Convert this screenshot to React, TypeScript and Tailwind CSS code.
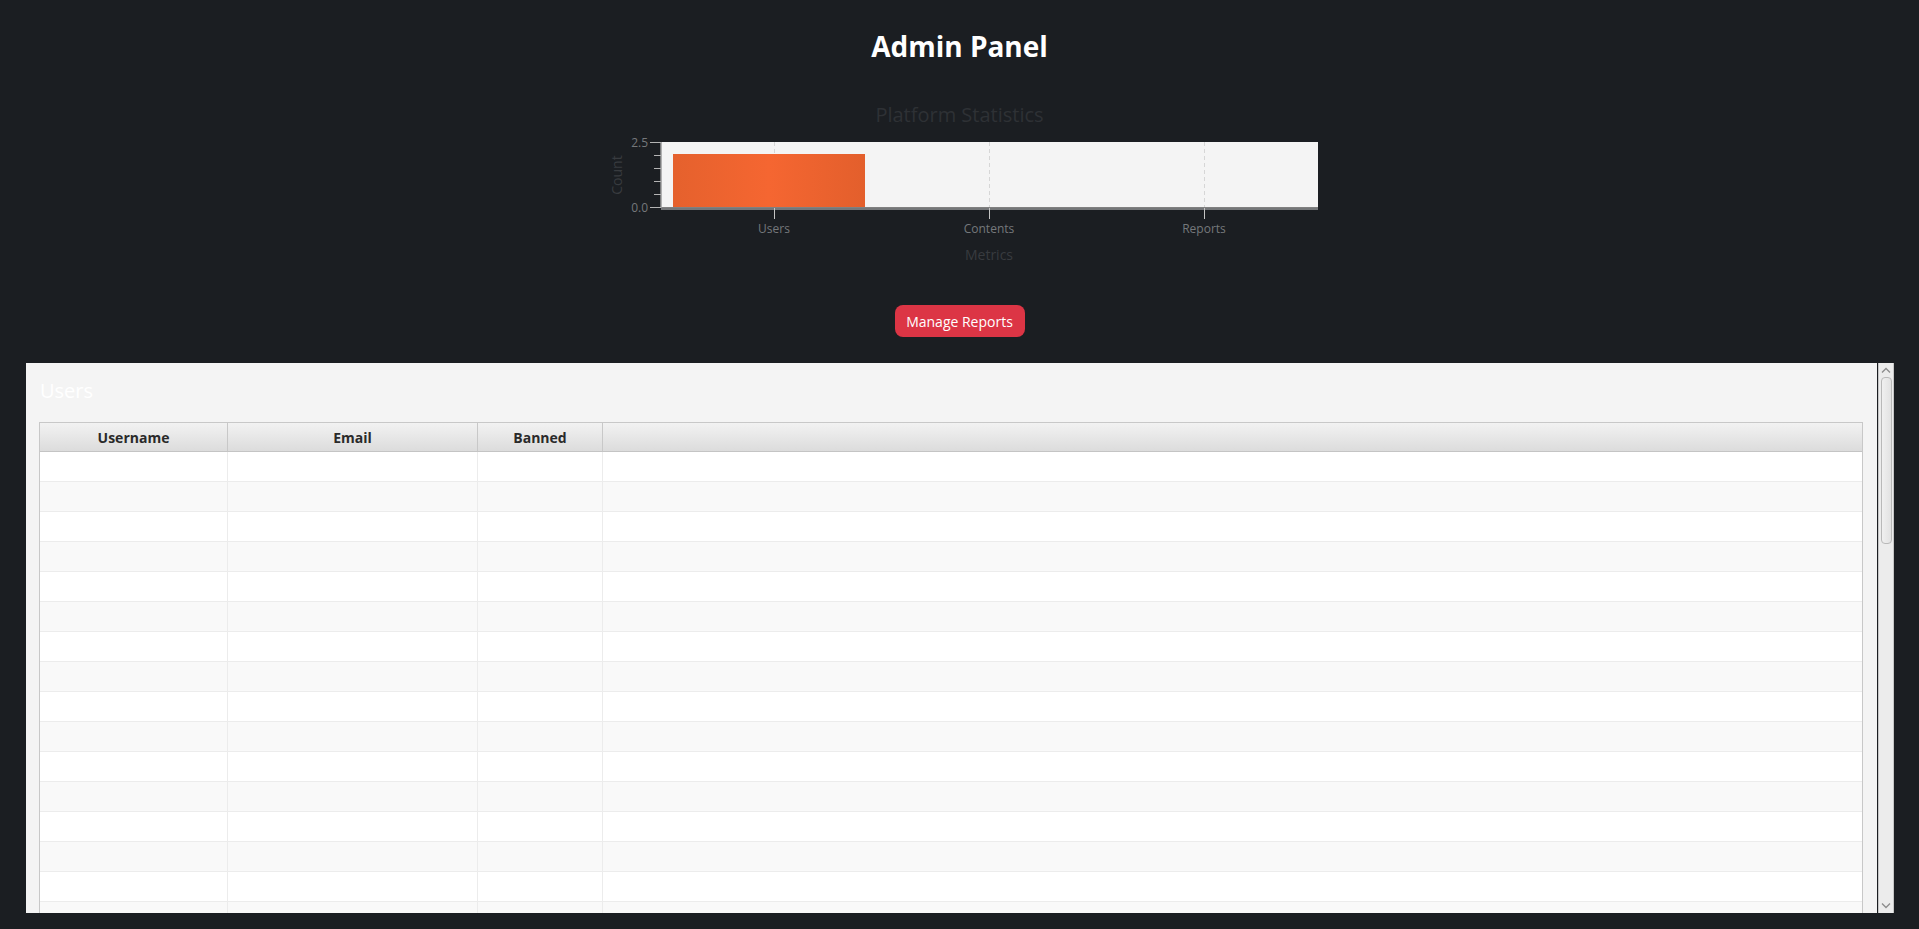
import React from 'react';

const COLS = [
  { key: 'username', label: 'Username', w: 'w-[188px]' },
  { key: 'email', label: 'Email', w: 'w-[250px]' },
  { key: 'banned', label: 'Banned', w: 'w-[125px]' },
];

const ROWS = Array.from({ length: 16 }, (_, i) => i);

function StatsChart() {
  // plot area: x 61..718, y 12..77 (svg coords)
  const gridX = [174, 389, 604];
  const minor = [25, 38, 51, 64];
  return (
    <svg width={720} height={140} viewBox="0 0 720 140" className="block mx-auto">
      <defs>
        <linearGradient id="bar" x1="0" x2="1" y1="0" y2="0">
          <stop offset="0" stopColor="#e5612d" />
          <stop offset="0.5" stopColor="#f56631" />
          <stop offset="1" stopColor="#e35f2c" />
        </linearGradient>
      </defs>
      <rect x={61} y={12} width={657} height={65} fill="#f4f4f4" />
      {gridX.map(x => (
        <line key={x} x1={x + 0.5} x2={x + 0.5} y1={12} y2={77} stroke="#d6d6d6" strokeDasharray="4 3" />
      ))}
      <rect x={73} y={24} width={192} height={53} fill="url(#bar)" />
      <line x1={61} x2={718} y1={77.5} y2={77.5} stroke="#808080" strokeWidth={1.2} />
      <line x1={61} x2={718} y1={79} y2={79} stroke="#cfcfcf" strokeWidth={1} />
      <line x1={61} x2={61} y1={12} y2={78} stroke="#9a9a9a" strokeWidth={1.5} />
      <line x1={50} x2={61} y1={12.5} y2={12.5} stroke="#b4b4b4" />
      <line x1={50} x2={61} y1={77.5} y2={77.5} stroke="#b4b4b4" />
      {minor.map(y => (
        <line key={y} x1={54} x2={61} y1={y + 0.5} y2={y + 0.5} stroke="#b4b4b4" />
      ))}
      {gridX.map(x => (
        <line key={'t' + x} x1={x + 0.5} x2={x + 0.5} y1={78} y2={89} stroke="#c4c4c4" />
      ))}
      <g fontFamily="'Open Sans', 'Noto Sans', sans-serif" fontSize={12} fill="#75787b">
        <text x={48} y={16.5} textAnchor="end">2.5</text>
        <text x={48} y={81.5} textAnchor="end">0.0</text>
        <text x={174} y={103} textAnchor="middle">Users</text>
        <text x={389} y={103} textAnchor="middle">Contents</text>
        <text x={604} y={103} textAnchor="middle">Reports</text>
      </g>
      <g fontFamily="'Open Sans', 'Noto Sans', sans-serif" fontSize={14} fill="#383b3f">
        <text x={389} y={130} textAnchor="middle">Metrics</text>
        <text x={0} y={0} textAnchor="middle" transform="translate(22 45) rotate(-90)">Count</text>
      </g>
    </svg>
  );
}

function Chevron({ up }: { up?: boolean }) {
  return (
    <svg width="10" height="6" viewBox="0 0 10 6" className="block mx-auto">
      <path d={up ? 'M1 5.5 L5 1.5 L9 5.5' : 'M1 0.5 L5 4.5 L9 0.5'} fill="none" stroke="#8c8c8c" strokeWidth="1.3" />
    </svg>
  );
}

export default function App() {
  return (
    <div className="min-h-[929px] h-[929px] overflow-hidden bg-[#1b1e22] font-['Open_Sans','Noto_Sans',sans-serif]">
      {/* Header */}
      <h1 className="pt-[27px] text-center text-[28px] leading-[38px] font-bold text-white">Admin Panel</h1>

      {/* Chart */}
      <p className="mt-[35px] text-center text-[20px] leading-[30px] text-[#2e3135]">Platform Statistics</p>
      <StatsChart />

      <div className="flex justify-center mt-[35px]">
        <button className="h-[32px] w-[130px] rounded-[8px] bg-[#dc3545] text-[14px] text-white">Manage Reports</button>
      </div>

      {/* Users panel */}
      <div className="mt-[26px] ml-[26px] w-[1868px] h-[550px] flex gap-px">
        <div className="w-[1851px] h-full bg-[#f4f4f4] overflow-hidden pl-[13px]">
          <p className="pl-px pt-[14px] text-[20px] leading-[28px] text-white">Users</p>
          <div className="mt-[17px] w-[1824px] border border-[#c8c8c8] bg-white">
            <div className="flex h-[29px] border-b border-[#c4c4c4] bg-gradient-to-b from-[#f2f2f2] to-[#dcdcdc]">
              {COLS.map(c => (
                <div key={c.key} className={c.w + ' shrink-0 border-r border-[#c8c8c8] flex items-center justify-center text-[14px] font-bold text-[#2a2a2a]'}>
                  {c.label}
                </div>
              ))}
              <div className="flex-1" />
            </div>
            {ROWS.map(i => (
              <div key={i} className={'flex h-[30px] border-b border-[#ececec] ' + (i % 2 === 0 ? 'bg-white' : 'bg-[#f9f9f9]')}>
                {COLS.map(c => (
                  <div key={c.key} className={c.w + ' shrink-0 border-r border-[#ececec]'} />
                ))}
                <div className="flex-1" />
              </div>
            ))}
          </div>
        </div>

        {/* Scrollbar */}
        <div className="w-[16px] h-full bg-[#ececec] border-x border-[#c6c6c6] flex flex-col items-center">
          <div className="h-[13px] w-full pt-[4px]"><Chevron up /></div>
          <div className="w-[11px] h-[167px] mt-px rounded-[4px] border border-[#b9b9b9] bg-gradient-to-r from-[#f0f0f0] to-[#e2e2e2]" />
          <div className="flex-1" />
          <div className="h-[13px] w-full pb-[4px] flex items-end"><Chevron /></div>
        </div>
      </div>
    </div>
  );
}
